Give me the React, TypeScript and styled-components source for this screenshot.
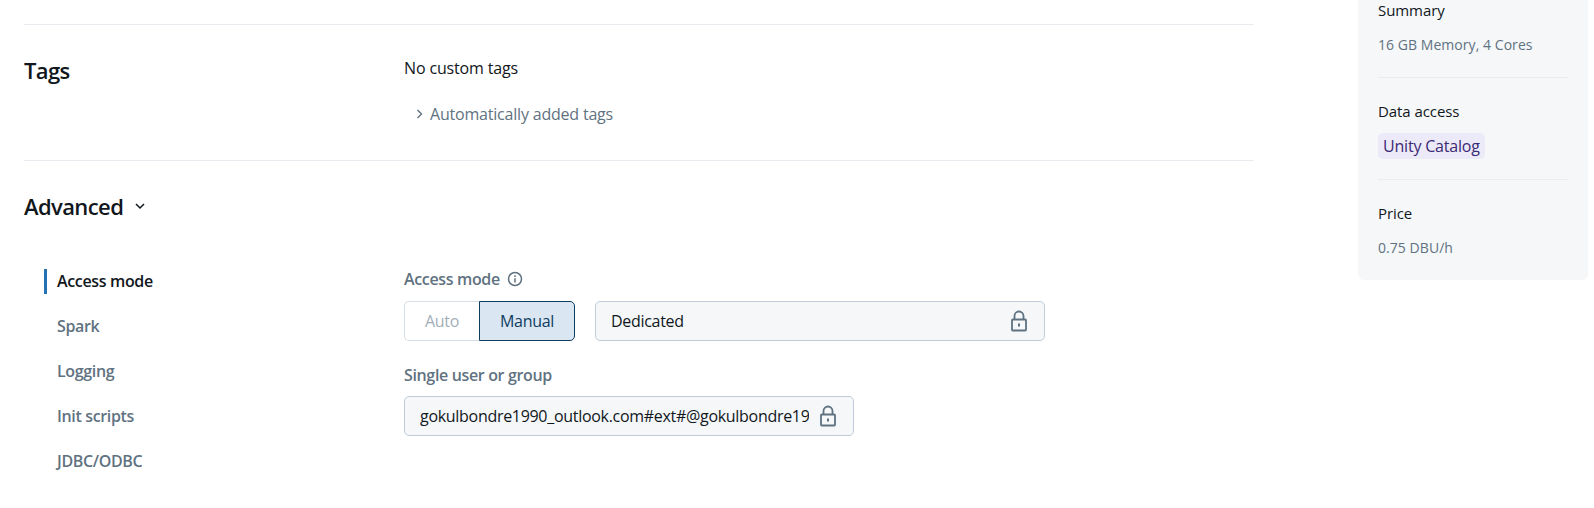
import React from "react";
import styled, { createGlobalStyle } from "styled-components";

const GlobalStyle = createGlobalStyle`
  html, body {
    margin: 0;
    padding: 0;
    background: #fff;
    overflow: hidden;
  }
  body {
    font-family: "Open Sans", "Noto Sans", sans-serif;
    font-size: 16px;
    color: #11171c;
  }
`;

const Page = styled.div`
  display: flex;
  align-items: flex-start;
  width: 1594px;
  height: 508px;
  overflow: hidden;
`;

const Main = styled.main`
  width: 1230px;
  margin-left: 24px;
  padding-top: 24px;
`;

const TagsSection = styled.section`
  display: flex;
  height: 137px;
  box-sizing: border-box;
  border-top: 1px solid #e8ecf0;
  border-bottom: 1px solid #e8ecf0;
`;

const LabelColumn = styled.div`
  width: 380px;
  flex: none;
`;

const SectionTitle = styled.h2`
  margin: 31px 0 0;
  font-size: 22px;
  line-height: 28px;
  font-weight: 600;
  letter-spacing: -0.6px;
`;

const TagsBody = styled.div`
  padding-top: 32px;
`;

const PlainLine = styled.div`
  font-size: 16px;
  line-height: 22px;
  letter-spacing: -0.15px;
`;

const AutoTags = styled.div`
  display: flex;
  align-items: center;
  gap: 5px;
  margin: 24px 0 0 11px;
  font-size: 16px;
  line-height: 22px;
  letter-spacing: -0.2px;
  color: #5f7281;
`;

const AdvancedHeader = styled.div`
  display: flex;
  align-items: center;
  gap: 11px;
  height: 28px;
  margin-top: 31px;
`;

const AdvancedTitle = styled(SectionTitle)`
  margin: 0;
`;

const AdvancedBody = styled.div`
  display: flex;
  margin-top: 49px;
`;

const SideNav = styled.nav`
  width: 380px;
  flex: none;
  display: flex;
  flex-direction: column;
  gap: 20px;
  padding-left: 20px;
  box-sizing: border-box;
`;

const NavItem = styled.div<{ $active?: boolean }>`
  height: 25px;
  line-height: 25px;
  padding-left: 10px;
  font-size: 16px;
  font-weight: 600;
  letter-spacing: -0.35px;
  color: ${(p) => (p.$active ? "#11171c" : "#5f7281")};
  border-left: 3px solid ${(p) => (p.$active ? "#2272b4" : "transparent")};
`;

const Form = styled.div`
  display: flex;
  flex-direction: column;
  margin-top: -1px;
`;

const FieldLabel = styled.div`
  display: flex;
  align-items: center;
  gap: 7px;
  height: 22px;
  font-size: 16px;
  font-weight: 600;
  letter-spacing: -0.35px;
  color: #5f7281;
`;

const ModeRow = styled.div`
  display: flex;
  gap: 20px;
  margin-top: 11px;
`;

const Toggle = styled.div`
  display: flex;
  height: 40px;
  width: 171px;
`;

const ToggleButton = styled.div<{ $on?: boolean }>`
  display: flex;
  align-items: center;
  justify-content: center;
  box-sizing: border-box;
  font-size: 16px;
  letter-spacing: -0.3px;
  width: ${(p) => (p.$on ? "96px" : "75px")};
  color: ${(p) => (p.$on ? "#0e3d60" : "#a3aeb8")};
  background: ${(p) => (p.$on ? "#dae6f2" : "#fff")};
  border: 1px solid ${(p) => (p.$on ? "#0e3d60" : "#d7dee5")};
  border-right-width: ${(p) => (p.$on ? "1px" : "0")};
  border-radius: ${(p) => (p.$on ? "0 5px 5px 0" : "5px 0 0 5px")};
`;

const LockedField = styled.div<{ $width: number }>`
  display: flex;
  align-items: center;
  justify-content: space-between;
  box-sizing: border-box;
  width: ${(p) => p.$width}px;
  height: 40px;
  padding: 0 16px 0 15px;
  background: #f5f7f9;
  border: 1px solid #c0cdd8;
  border-radius: 5px;
  font-size: 16px;
  letter-spacing: -0.3px;
  color: #11171c;
`;

const ClippedText = styled.span`
  display: block;
  width: 389px;
  overflow: hidden;
  white-space: nowrap;
`;

const UserLabel = styled(FieldLabel)`
  margin-top: 23px;
`;

const UserField = styled(LockedField)`
  margin-top: 10px;
`;

const Aside = styled.aside`
  width: 230px;
  height: 280px;
  margin-left: 104px;
  box-sizing: border-box;
  padding: 0 20px;
  background: #f5f7f9;
  border-radius: 0 0 6px 6px;
`;

const AsideGroup = styled.div`
  height: 102px;
  box-sizing: border-box;
  border-bottom: 1px solid #eaedf0;
  &:first-child {
    height: 79px;
  }
  &:last-child {
    border-bottom: 0;
    height: auto;
    padding-top: 22px;
  }
  &:nth-child(2) {
    padding-top: 22px;
  }
`;

const AsideHeading = styled.div`
  font-size: 15px;
  line-height: 22px;
  letter-spacing: -0.07px;
  color: #11171c;
`;

const AsideValue = styled.div`
  margin-top: 13px;
  font-size: 14px;
  line-height: 22px;
  letter-spacing: 0.05px;
  color: #5f7281;
`;

const Chip = styled.span`
  display: inline-block;
  margin-top: 11px;
  padding: 0 5px;
  height: 26px;
  line-height: 27px;
  font-size: 16px;
  letter-spacing: -0.2px;
  color: #3b2a74;
  background: #ece9f8;
  border-radius: 5px;
`;

const FirstHeading = styled(AsideHeading)`
  margin-top: -1px;
`;

const LockIcon = () => (
  <svg width="18" height="22" viewBox="0 0 18 22" fill="none" stroke="#5f7281" strokeWidth="1.8" style={{ flex: "none" }}>
    <rect x="2" y="9.5" width="14" height="11" rx="0.8" />
    <path d="M4.5 9.5V6a4.5 4.5 0 0 1 9 0v3.5" />
    <path d="M9 13.5v3" strokeWidth="2" />
  </svg>
);

const InfoIcon = () => (
  <svg width="16" height="16" viewBox="0 0 16 16" fill="none" stroke="#5f7281" strokeWidth="1.5">
    <circle cx="8" cy="8" r="6.5" />
    <path d="M8 7.2V11.5" />
    <path d="M8 4.3v1.6" />
  </svg>
);

const ChevronRight = () => (
  <svg width="10" height="12" viewBox="0 0 10 12" fill="none" stroke="#5f7281" strokeWidth="1.4">
    <path d="M2.5 2l4 4-4 4" />
  </svg>
);

const ChevronDown = () => (
  <svg width="12" height="10" viewBox="0 0 12 10" fill="none" stroke="#11171c" strokeWidth="1.5">
    <path d="M2 3l4 4 4-4" />
  </svg>
);

const navItems = ["Access mode", "Spark", "Logging", "Init scripts", "JDBC/ODBC"];

export default function App() {
  return (
    <Page>
      <GlobalStyle />
      <Main>
        <TagsSection>
          <LabelColumn>
            <SectionTitle>Tags</SectionTitle>
          </LabelColumn>
          <TagsBody>
            <PlainLine>No custom tags</PlainLine>
            <AutoTags>
              <ChevronRight />
              Automatically added tags
            </AutoTags>
          </TagsBody>
        </TagsSection>
        <AdvancedHeader>
          <AdvancedTitle>Advanced</AdvancedTitle>
          <ChevronDown />
        </AdvancedHeader>
        <AdvancedBody>
          <SideNav>
            {navItems.map((item, i) => (
              <NavItem key={item} $active={i === 0}>
                {item}
              </NavItem>
            ))}
          </SideNav>
          <Form>
            <FieldLabel>
              Access mode <InfoIcon />
            </FieldLabel>
            <ModeRow>
              <Toggle>
                <ToggleButton>Auto</ToggleButton>
                <ToggleButton $on>Manual</ToggleButton>
              </Toggle>
              <LockedField $width={450}>
                Dedicated
                <LockIcon />
              </LockedField>
            </ModeRow>
            <UserLabel>Single user or group</UserLabel>
            <UserField $width={450}>
              <ClippedText>gokulbondre1990_outlook.com#ext#@gokulbondre1990outlook.onmicrosoft.com</ClippedText>
              <LockIcon />
            </UserField>
          </Form>
        </AdvancedBody>
      </Main>
      <Aside>
        <AsideGroup>
          <FirstHeading>Summary</FirstHeading>
          <AsideValue>16 GB Memory, 4 Cores</AsideValue>
        </AsideGroup>
        <AsideGroup>
          <AsideHeading>Data access</AsideHeading>
          <Chip>Unity Catalog</Chip>
        </AsideGroup>
        <AsideGroup>
          <AsideHeading>Price</AsideHeading>
          <AsideValue>0.75 DBU/h</AsideValue>
        </AsideGroup>
      </Aside>
    </Page>
  );
}
